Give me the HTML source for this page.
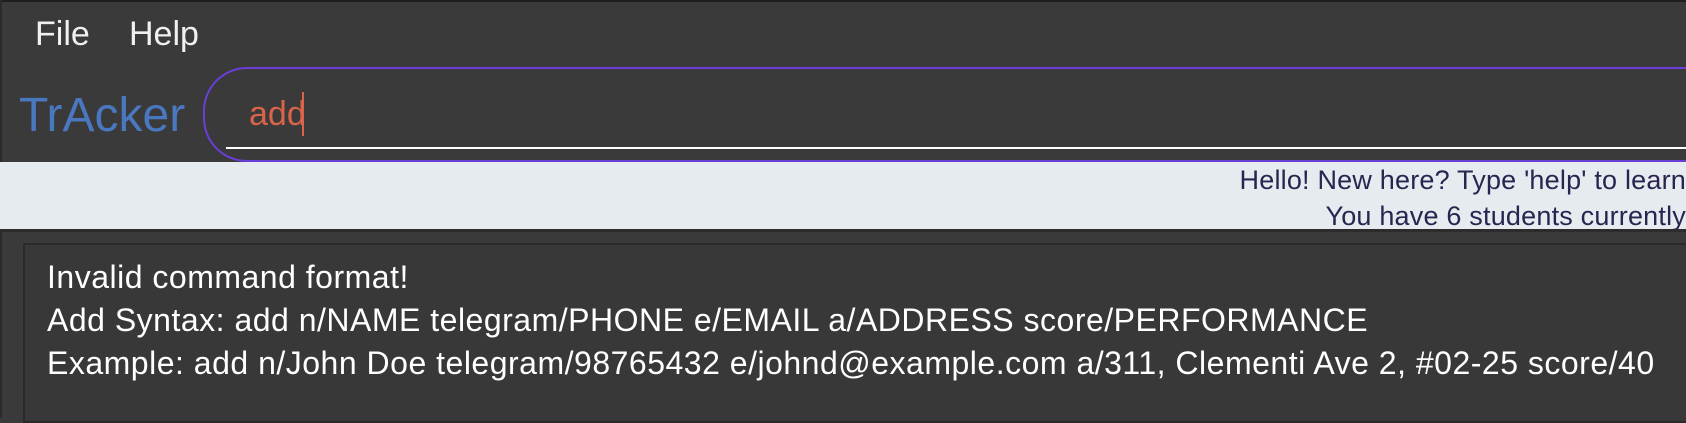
<!DOCTYPE html>
<html><head><meta charset="utf-8"><style>
html,body{margin:0;padding:0;width:1686px;height:418px;overflow:hidden;background:#3a3a3a;font-family:"Liberation Sans",sans-serif;}
.abs{position:absolute;white-space:nowrap;}
</style></head><body>
<div class="abs" style="left:0;top:0;width:1686px;height:2px;background:#1e1e1e"></div>
<div class="abs" style="left:0;top:0;width:2px;height:418px;background:#2a2a2a"></div>
<div class="abs" style="left:35px;top:15px;font-size:34px;color:#f0f0f0">File</div>
<div class="abs" style="left:129px;top:15px;font-size:34px;color:#f0f0f0">Help</div>
<div class="abs" style="left:19px;top:88px;font-size:48px;color:#4a78c0">TrAcker</div>
<div class="abs" style="left:203px;top:67px;width:1560px;height:95px;border:2px solid #6a3fd8;border-radius:44px;box-sizing:border-box"></div>
<div class="abs" style="left:249px;top:95px;font-size:34px;color:#d9644a">add</div>
<div class="abs" style="left:302px;top:92px;width:2px;height:44px;background:#d9644a"></div>
<div class="abs" style="left:226px;top:147px;width:1460px;height:2px;background:#ffffff"></div>
<div class="abs" style="left:0;top:162px;width:1686px;height:67px;background:#e6ebf0"></div>
<div class="abs" style="left:0;top:162px;width:1686px;text-align:right;font-size:27px;letter-spacing:0.2px;color:#2a2550;line-height:36px">Hello! New here? Type 'help' to learn<br>You have 6 students currently</div>
<div class="abs" style="left:0;top:229px;width:1686px;height:3px;background:#2c2c2c"></div>
<div class="abs" style="left:23px;top:243px;width:1680px;height:180px;background:#383838;border:2px solid #2a2a2a;box-sizing:border-box"></div>
<div class="abs" style="left:47px;top:256px;font-size:32px;letter-spacing:0.5px;color:#ffffff;line-height:43px">Invalid command format!<br>Add Syntax: add n/NAME telegram/PHONE e/EMAIL a/ADDRESS score/PERFORMANCE<br>Example: add n/John Doe telegram/98765432 e/johnd@example.com a/311, Clementi Ave 2, #02-25 score/40</div>
</body></html>
